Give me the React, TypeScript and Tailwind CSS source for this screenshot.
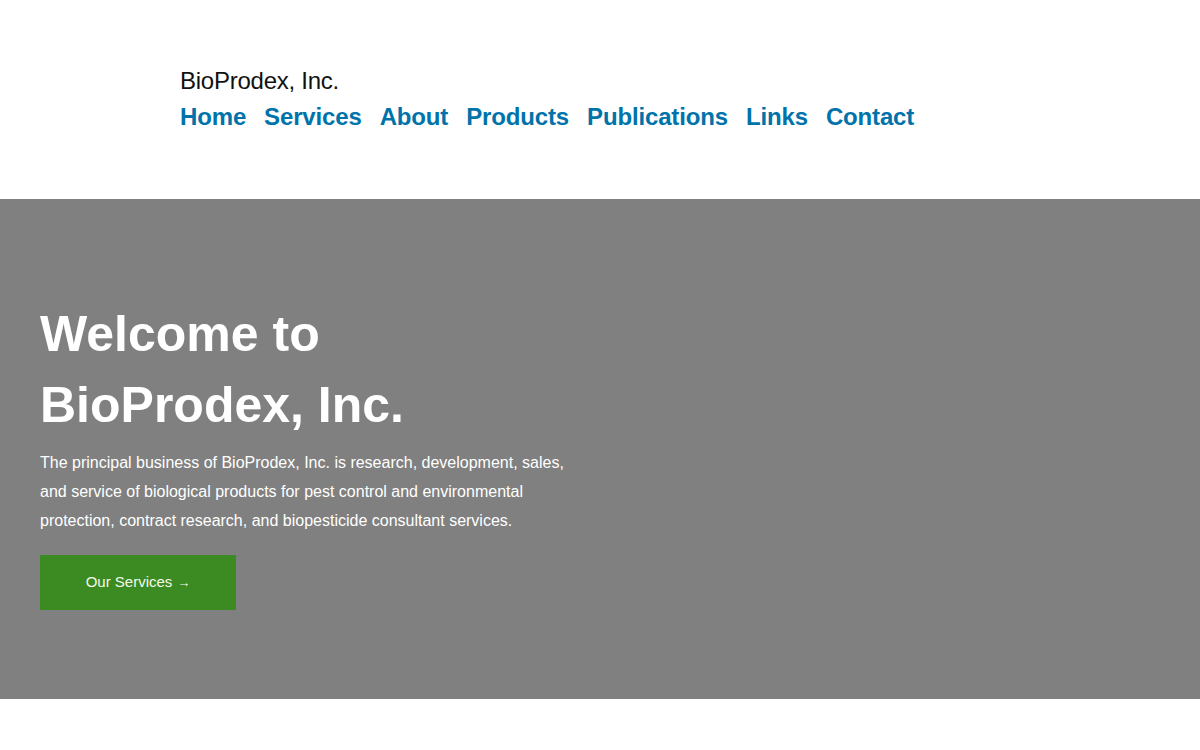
import React from 'react';

const navItems = ['Home', 'Services', 'About', 'Products', 'Publications', 'Links', 'Contact'];

const App = () => {
    return (
        <div className="min-h-[750px] bg-white font-['Liberation_Sans',Arial,sans-serif]">

            <header className="h-[199px] pt-[66px] px-[180px]">
                <p className="text-[24px] leading-[30px] tracking-[-0.25px] text-[#111111]">BioProdex, Inc.</p>
                <nav className="mt-[3px] flex gap-[18px]">
                    {navItems.map((item) => (
                        <a key={item} href="#" className="text-[24px] leading-[36px] font-bold tracking-[-0.15px] text-[#0073aa]">
                            {item}
                        </a>
                    ))}
                </nav>
            </header>

            <section className="h-[500px] bg-[#808080] px-[40px] pt-[100px]">
                <h1 className="text-[50px] leading-[71px] font-bold text-white">
                    Welcome to<br />BioProdex, Inc.
                </h1>
                <p className="mt-[7px] w-[540px] text-[16px] leading-[29px] text-white">
                    The principal business of BioProdex, Inc. is research, development, sales, and service of biological products for pest control and environmental protection, contract research, and biopesticide consultant services.
                </p>
                <a href="#" className="mt-[20px] flex items-center justify-center w-[196px] h-[55px] bg-[#3b8a22] text-[15px] text-[#f4fbe8]">
                    Our Services <span className="ml-[5px] text-[13px]">→</span>
                </a>
            </section>

        </div>
    );
};

export default App;
